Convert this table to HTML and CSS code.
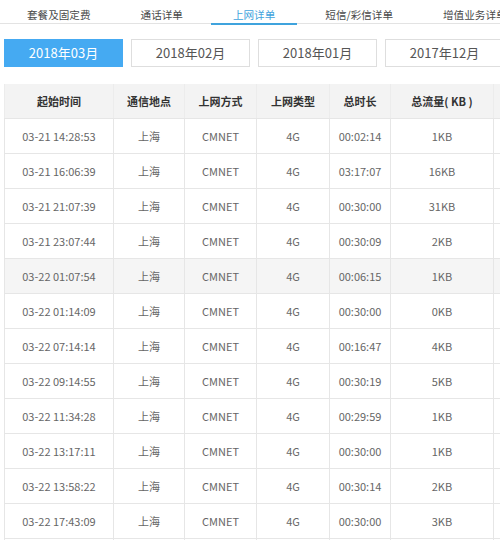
FILE: index.html
```html
<!DOCTYPE html>
<html lang="zh">
<head>
<meta charset="utf-8">
<link rel="stylesheet" href="styles.css">
</head>
<body>
<div class="page">
  <nav class="tabs">
    <span class="tab">套餐及固定费</span>
    <span class="tab">通话详单</span>
    <span class="tab active">上网详单</span>
    <span class="tab">短信/彩信详单</span>
    <span class="tab">增值业务详单</span>
  </nav>
  <div class="months">
    <span class="month active">2018年03月</span>
    <span class="month">2018年02月</span>
    <span class="month">2018年01月</span>
    <span class="month">2017年12月</span>
  </div>
  <table class="detail">
    <colgroup>
      <col class="c1"><col class="c2"><col class="c3"><col class="c4"><col class="c5"><col class="c6"><col class="c7">
    </colgroup>
    <thead>
      <tr><th>起始时间</th><th>通信地点</th><th>上网方式</th><th>上网类型</th><th>总时长</th><th>总流量(&nbsp;KB&nbsp;)</th><th></th></tr>
    </thead>
    <tbody>
      <tr><td>03-21 14:28:53</td><td>上海</td><td>CMNET</td><td>4G</td><td>00:02:14</td><td>1KB</td><td></td></tr>
      <tr><td>03-21 16:06:39</td><td>上海</td><td>CMNET</td><td>4G</td><td>03:17:07</td><td>16KB</td><td></td></tr>
      <tr><td>03-21 21:07:39</td><td>上海</td><td>CMNET</td><td>4G</td><td>00:30:00</td><td>31KB</td><td></td></tr>
      <tr><td>03-21 23:07:44</td><td>上海</td><td>CMNET</td><td>4G</td><td>00:30:09</td><td>2KB</td><td></td></tr>
      <tr class="hover"><td>03-22 01:07:54</td><td>上海</td><td>CMNET</td><td>4G</td><td>00:06:15</td><td>1KB</td><td></td></tr>
      <tr><td>03-22 01:14:09</td><td>上海</td><td>CMNET</td><td>4G</td><td>00:30:00</td><td>0KB</td><td></td></tr>
      <tr><td>03-22 07:14:14</td><td>上海</td><td>CMNET</td><td>4G</td><td>00:16:47</td><td>4KB</td><td></td></tr>
      <tr><td>03-22 09:14:55</td><td>上海</td><td>CMNET</td><td>4G</td><td>00:30:19</td><td>5KB</td><td></td></tr>
      <tr><td>03-22 11:34:28</td><td>上海</td><td>CMNET</td><td>4G</td><td>00:29:59</td><td>1KB</td><td></td></tr>
      <tr><td>03-22 13:17:11</td><td>上海</td><td>CMNET</td><td>4G</td><td>00:30:00</td><td>1KB</td><td></td></tr>
      <tr><td>03-22 13:58:22</td><td>上海</td><td>CMNET</td><td>4G</td><td>00:30:14</td><td>2KB</td><td></td></tr>
      <tr><td>03-22 17:43:09</td><td>上海</td><td>CMNET</td><td>4G</td><td>00:30:00</td><td>3KB</td><td></td></tr>
      <tr><td></td><td></td><td></td><td></td><td></td><td></td><td></td></tr>
    </tbody>
  </table>
</div>
</body>
</html>
```
FILE: styles.css
```css
html, body {
  margin: 0;
  padding: 0;
  overflow: hidden;
  background: #fff;
}
body {
  font-family: "Noto Sans CJK SC", "Noto Sans", sans-serif;
  color: #666;
  width: 500px;
  height: 540px;
}
.page {
  width: 500px;
  height: 540px;
  overflow: hidden;
}
.tabs {
  display: flex;
  gap: 6px;
  padding-left: 5px;
  border-bottom: 1px solid #e3e3e3;
  height: 23px;
  white-space: nowrap;
}
.tab {
  flex: none;
  padding: 9px 22px 0;
  font-size: 10.6px;
  line-height: 12px;
  color: #4a4a4a;
  height: 14px;
}
.tab.active {
  color: #3fa3dd;
  border-bottom: 2px solid #3fa3dd;
}
.months {
  display: flex;
  gap: 8px;
  padding-left: 4px;
  margin-top: 15px;
  white-space: nowrap;
}
.month {
  flex: none;
  box-sizing: border-box;
  width: 119px;
  height: 28px;
  border: 1px solid #dedede;
  text-align: center;
  line-height: 26px;
  font-size: 13px;
  color: #555;
}
.month.active {
  background: #45aaf2;
  border-color: #45aaf2;
  color: #fff;
}
.detail {
  margin-top: 17px;
  margin-left: 4px;
  border-collapse: collapse;
  table-layout: fixed;
  width: 560px;
  font-size: 11px;
}
.c1 { width: 109px; }
.c2 { width: 71px; }
.c3 { width: 72px; }
.c4 { width: 73px; }
.c5 { width: 61px; }
.c6 { width: 103px; }
.c7 { width: 71px; }
.detail th {
  background: #f3f3f3;
  color: #333;
  font-weight: bold;
  height: 34px;
  padding: 0;
  border-left: 1px solid #ececec;
  border-right: 1px solid #ececec;
  border-bottom: 1px solid #e6e6e6;
  text-align: center;
}
.detail td {
  height: 34px;
  padding: 0;
  text-align: center;
  color: #666;
  border: 1px solid #e6e6e6;
}
.detail tr.hover td {
  background: #f5f5f5;
}
```
